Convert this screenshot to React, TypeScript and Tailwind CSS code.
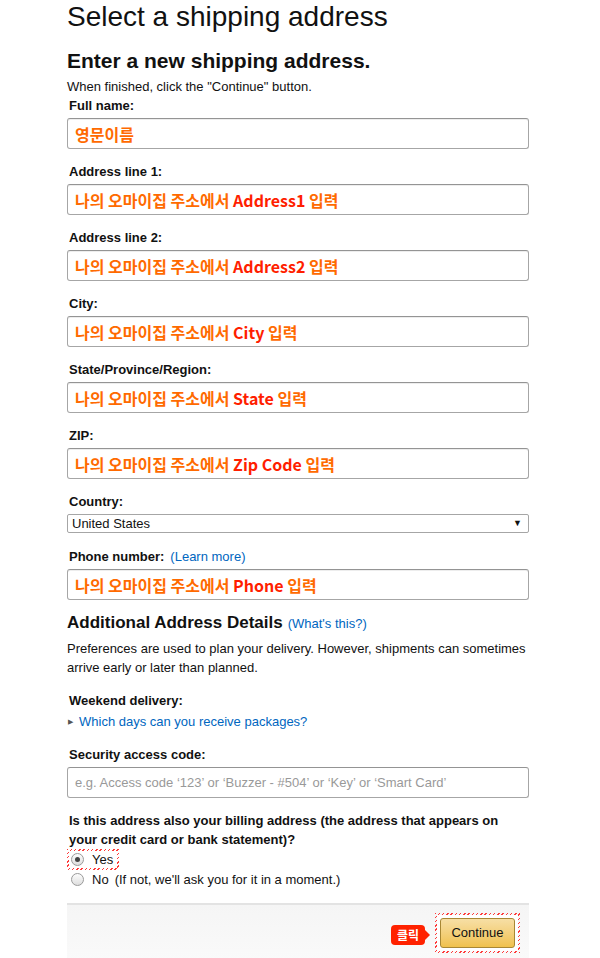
import type { ReactNode } from 'react'

const hatch =
  'bg-[repeating-linear-gradient(135deg,#ff3a3a_0px,#ff3a3a_1px,transparent_1px,transparent_3px)]'

function Label({ children }: { children: ReactNode }) {
  return <div className="pl-[2px] text-[13px] font-bold leading-[19px] text-[#111]">{children}</div>
}

function KoInput({ en, plain }: { en?: string; plain?: string }) {
  return (
    <div className="mt-[3px] flex h-[31px] items-center rounded-[3px] border border-[#a6a6a6] border-t-[#949494] bg-white px-[7px] shadow-[0_1px_0_rgba(255,255,255,0.5),inset_0_1px_0_rgba(0,0,0,0.07)]">
      <span className="text-[16px] font-bold leading-[20px] text-[#ff6a00] [font-family:'Noto_Sans_CJK_KR','Liberation_Sans',sans-serif]">
        {plain ? (
          plain
        ) : (
          <>
            나의 오마이집 주소에서 <span className="text-[#ff1e00]">{en}</span> 입력
          </>
        )}
      </span>
    </div>
  )
}

function Field({ label, en, plain }: { label: ReactNode; en?: string; plain?: string }) {
  return (
    <div className="mb-[13px]">
      <Label>{label}</Label>
      <KoInput en={en} plain={plain} />
    </div>
  )
}

function Radio({ checked }: { checked?: boolean }) {
  return (
    <span className="flex h-[13px] w-[13px] items-center justify-center rounded-full border border-[#9a9a9a] bg-gradient-to-b from-[#fdfdfd] to-[#dedede]">
      {checked && <span className="h-[5px] w-[5px] rounded-full bg-[#444]" />}
    </span>
  )
}

export default function App() {
  return (
    <div className="min-h-[958px] bg-white text-[#111] [font-family:'Liberation_Sans',Arial,sans-serif]">
      <div className="ml-[67px] w-[462px]">
        <h1 className="text-[28px] font-normal leading-[34px] text-[#111]">Select a shipping address</h1>
        <h2 className="mt-[14px] text-[21px] font-bold leading-[26px]">Enter a new shipping address.</h2>
        <p className="mt-[3px] text-[13px] leading-[19px]">When finished, click the "Continue" button.</p>

        <Field label="Full name:" plain="영문이름" />
        <Field label="Address line 1:" en="Address1" />
        <Field label="Address line 2:" en="Address2" />
        <Field label="City:" en="City" />
        <Field label="State/Province/Region:" en="State" />
        <Field label="ZIP:" en="Zip Code" />

        <Label>Country:</Label>
        <div className="mt-[3px] flex h-[19px] items-center justify-between rounded-[2px] border border-[#a6a6a6] bg-white pl-[4px] pr-[6px] text-[13px] leading-[17px]">
          <span>United States</span>
          <span className="text-[9px] text-[#111]">▼</span>
        </div>

        <div className="mt-[14px]">
          <Label>
            Phone number:
            <span className="ml-[6px] font-normal text-[#0066c0]">(Learn more)</span>
          </Label>
          <KoInput en="Phone" />
        </div>

        <div className="mt-[12px] flex items-baseline gap-[5px] leading-[22px]">
          <span className="text-[17px] font-bold">Additional Address Details</span>
          <span className="text-[13px] text-[#0066c0]">(What's this?)</span>
        </div>
        <p className="mt-[4px] text-[13px] leading-[19px]">
          Preferences are used to plan your delivery. However, shipments can sometimes arrive early or later than planned.
        </p>

        <div className="mt-[14px]">
          <Label>Weekend delivery:</Label>
          <div className="mt-[2px] flex items-center text-[13px] leading-[19px]">
            <span className="ml-[1px] mr-[6px] text-[7px] text-[#555]">▶</span>
            <span className="text-[#0066c0]">Which days can you receive packages?</span>
          </div>
        </div>

        <div className="mt-[14px]">
          <Label>Security access code:</Label>
          <div className="mt-[3px] flex h-[31px] items-center rounded-[3px] border border-[#a6a6a6] border-t-[#949494] bg-white px-[7px] text-[13px] text-[#999]">
            e.g. Access code ‘123’ or ‘Buzzer - #504’ or ‘Key’ or ‘Smart Card’
          </div>
        </div>

        <p className="mt-[13px] max-w-[440px] pl-[2px] text-[13px] font-bold leading-[19px]">
          Is this address also your billing address (the address that appears on your credit card or bank statement)?
        </p>

        <div className="flex">
          <div className={`p-[2px] ${hatch}`}>
            <div className="flex h-[17px] w-[48px] items-center bg-white pl-[2px] text-[13px]">
              <Radio checked />
              <span className="ml-[8px]">Yes</span>
            </div>
          </div>
        </div>
        <div className="flex h-[19px] items-center pl-[4px] text-[13px]">
          <Radio />
          <span className="ml-[8px]">No</span>
          <span className="ml-[6px]">(If not, we'll ask you for it in a moment.)</span>
        </div>

        <div className="mt-[14px] flex h-[70px] items-start justify-end border-t-2 border-[#e3e3e3] bg-gradient-to-b from-[#f5f5f5] to-[#fbfbfb] pr-[9px] pt-[8px]">
          <div className="mr-[5px] mt-[12px] flex items-center">
            <span className="rounded-[4px] bg-[#ff2200] px-[6px] text-[12px] font-bold leading-[20px] text-white [font-family:'Noto_Sans_CJK_KR',sans-serif]">
              클릭
            </span>
            <span className="h-0 w-0 border-y-[5px] border-l-[5px] border-y-transparent border-l-[#ff2200]" />
          </div>
          <div className={`p-[2px] ${hatch}`}>
            <div className="bg-white p-[3px]">
              <div className="flex h-[30px] w-[75px] items-center justify-center rounded-[3px] border border-[#a88734] bg-gradient-to-b from-[#f7dfa5] to-[#f0c14b] text-[13px] text-[#111]">
                Continue
              </div>
            </div>
          </div>
        </div>
      </div>
    </div>
  )
}
